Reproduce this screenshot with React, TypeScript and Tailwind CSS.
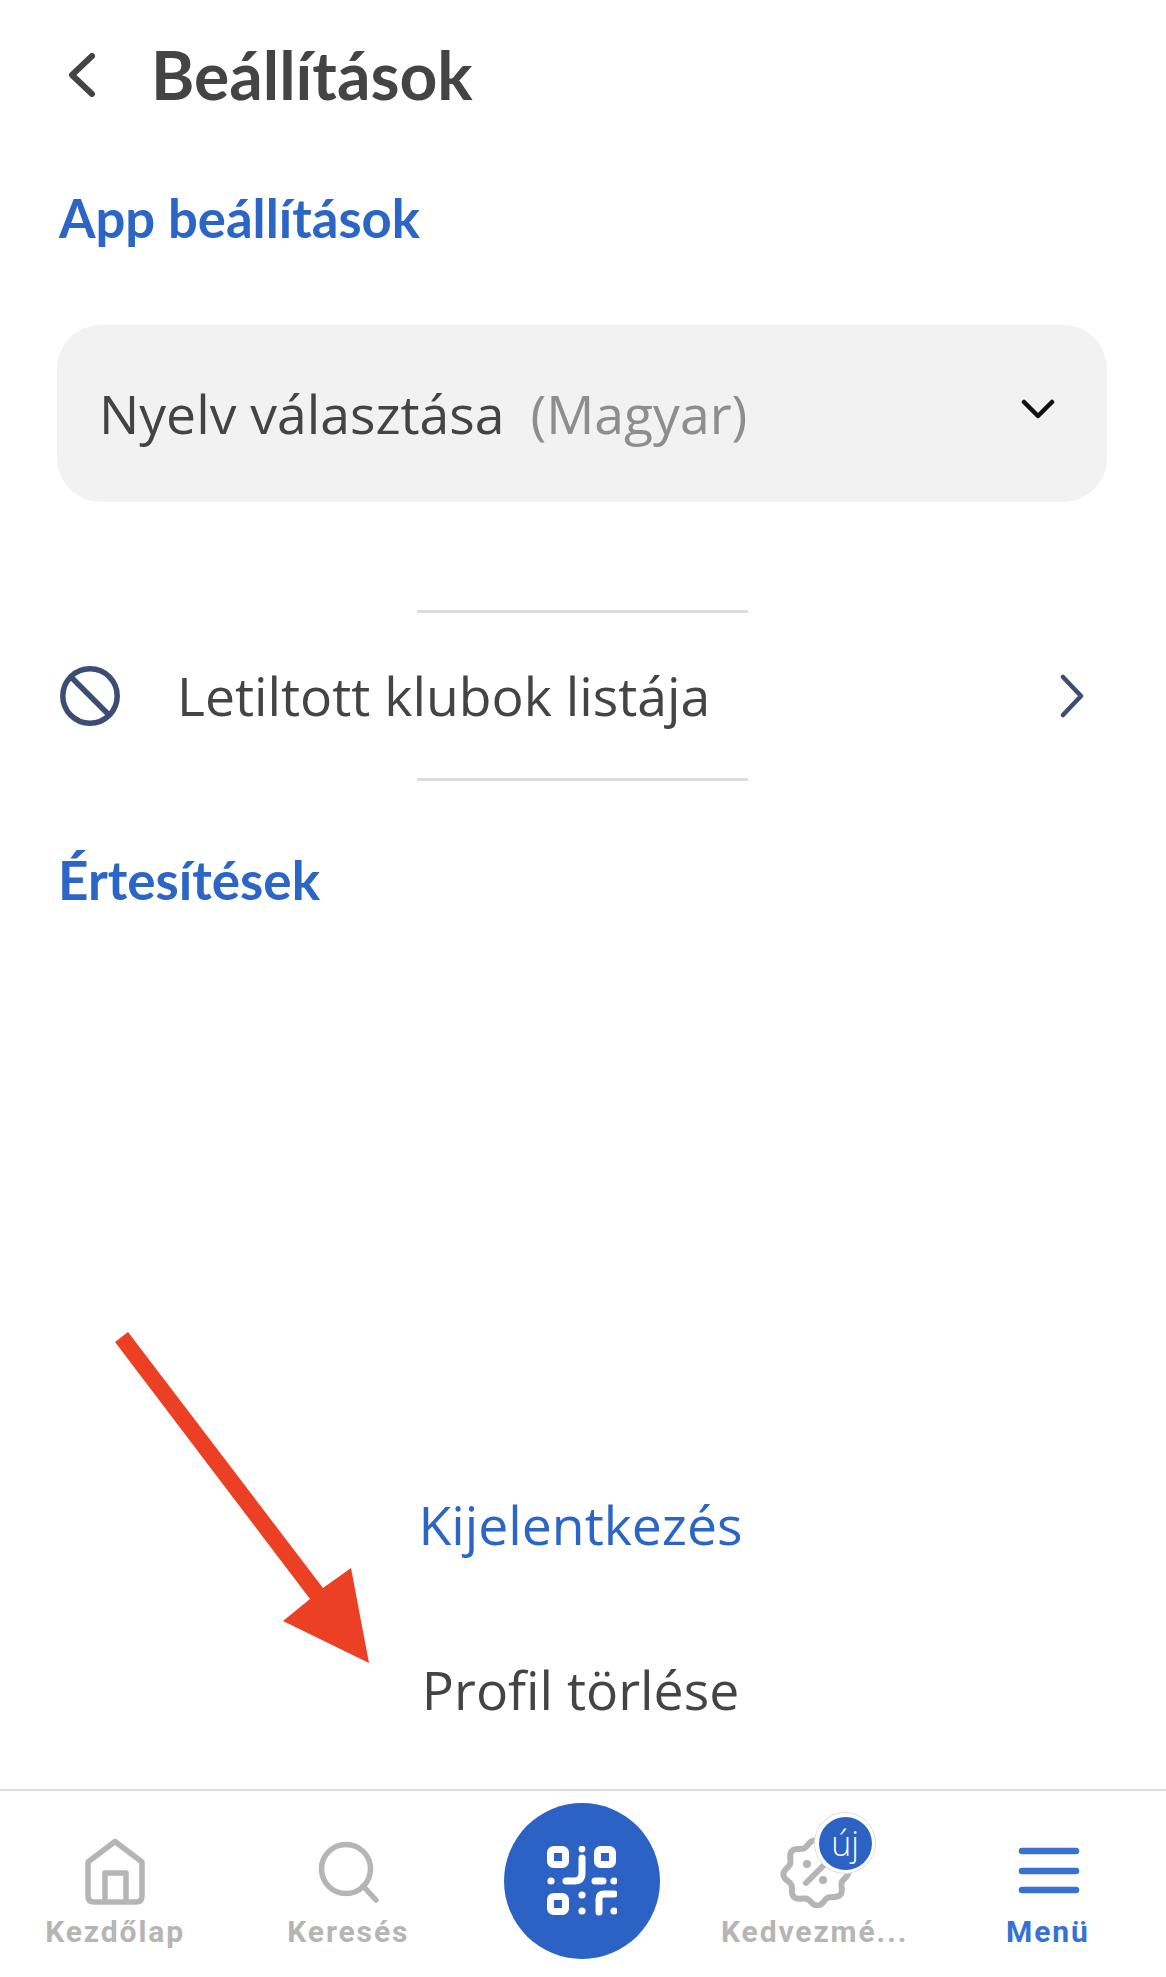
import React from "react";

const scallop = (() => {
  const pts: string[] = [];
  for (let i = 0; i <= 160; i++) {
    const a = (i / 160) * Math.PI * 2;
    const r = 30 + 2.6 * Math.cos(8 * a + 0.4);
    pts.push(`${(40 + r * Math.cos(a)).toFixed(2)} ${(37 + r * Math.sin(a)).toFixed(2)}`);
  }
  return "M" + pts.join("L") + "Z";
})();

function NavLabel({ text, active }: { text: string; active?: boolean }) {
  return (
    <span
      className={`mt-[6px] mr-[3px] h-[36px] font-['Roboto',sans-serif] text-[30px] leading-[36px] font-bold tracking-[1.9px] whitespace-nowrap ${
        active ? "text-[#3771d4]" : "text-[#b5b5b5]"
      }`}
    >
      {text}
    </span>
  );
}

function BottomNav() {
  return (
    <nav className="grid h-[188px] shrink-0 grid-cols-5 border-t-2 border-[#dcdcdc] bg-white">
      <div className="flex flex-col items-center pt-[45px]">
        <svg width="80" height="72" viewBox="0 0 80 72" fill="none" stroke="#b5b5b5" strokeWidth="5.5" strokeLinejoin="round">
          <path d="M38 5.5 L65 26 V60 Q65 66 59 66 H17 Q11 66 11 60 V26 Z" />
          <path d="M28 65 V37 H49 V65" />
        </svg>
        <NavLabel text="Kezdőlap" />
      </div>
      <div className="flex flex-col items-center pt-[45px]">
        <svg width="80" height="72" viewBox="0 0 80 72" fill="none" stroke="#b5b5b5" strokeWidth="5.5" strokeLinecap="round">
          <circle cx="36" cy="33" r="24.5" />
          <path d="M53 50 L66 64" />
        </svg>
        <NavLabel text="Keresés" />
      </div>
      <div className="flex justify-center pt-[12px] pr-[2px]">
        <div className="flex h-[156px] w-[156px] items-center justify-center rounded-full bg-[#2b62c4]">
          <svg width="70" height="70" viewBox="0 0 70 70" fill="none" stroke="#fff" strokeWidth="7" strokeLinecap="round">
            <rect x="3.5" y="3.5" width="15" height="15" rx="3" />
            <rect x="50.5" y="3.5" width="15" height="15" rx="3" />
            <rect x="3.5" y="50.5" width="15" height="15" rx="3" />
            <path d="M35 12 V27 Q35 35 27 35 H19" />
            <path d="M48 35 H56" />
            <path d="M52 66 V53 Q52 48 57 48 H67" />
            <g fill="#fff" stroke="none">
              <circle cx="35" cy="3" r="3.4" />
              <circle cx="4" cy="35" r="3.6" />
              <circle cx="67" cy="35" r="3.6" />
              <circle cx="35" cy="49" r="3.6" />
              <circle cx="35" cy="65" r="3.6" />
              <circle cx="67" cy="65" r="3.6" />
            </g>
          </svg>
        </div>
      </div>
      <div className="flex flex-col items-center pt-[45px]">
        <div className="relative h-[72px] w-[80px]">
          <svg width="80" height="72" viewBox="0 0 80 72" fill="none" stroke="#b5b5b5" strokeWidth="6" strokeLinecap="round">
            <path d={scallop} />
            <path d="M30 47 L49 28" />
            <g fill="#b5b5b5" stroke="none">
              <circle cx="31" cy="28" r="4" />
              <circle cx="47" cy="44" r="4" />
            </g>
          </svg>
          <div className="absolute top-[-24px] left-[38px] flex h-[62px] w-[62px] items-center justify-center rounded-full border border-[#dedede] bg-white">
            <span className="flex h-[53px] w-[53px] items-center justify-center rounded-full bg-[#2b62c4] font-['Open_Sans',sans-serif] text-[34px] leading-none font-light text-white">
              új
            </span>
          </div>
        </div>
        <NavLabel text="Kedvezmé..." />
      </div>
      <div className="flex flex-col items-center pt-[45px]">
        <svg width="80" height="72" viewBox="0 0 80 72" fill="none" stroke="#3771d4" strokeWidth="6.5" strokeLinecap="round">
          <path d="M13 15 H67 M13 35 H67 M13 54 H67" />
        </svg>
        <NavLabel text="Menü" active />
      </div>
    </nav>
  );
}

export default function App() {
  return (
    <div className="relative flex h-[1977px] w-[1166px] flex-col overflow-hidden bg-white font-['Open_Sans',sans-serif] text-[#444]">
      <header className="flex h-[150px] items-center pl-[69px]">
        <svg width="26" height="44" viewBox="0 0 26 44" fill="none" stroke="#444" strokeWidth="6" strokeLinecap="round" strokeLinejoin="round">
          <path d="M23 3 L3 22 L23 41" />
        </svg>
        <h1 className="ml-[56px] font-['Lato',sans-serif] text-[66px] leading-[70px] font-bold text-[#444]">
          Beállítások
        </h1>
      </header>

      <h2 className="mt-[38px] h-[60px] pl-[59px] font-['Lato',sans-serif] text-[52.6px] leading-[60px] font-bold text-[#2b65c6]">
        App beállítások
      </h2>

      <div className="mt-[77px] mr-[59px] ml-[57px] flex h-[177px] items-center justify-between rounded-[44px] bg-[#f2f2f3] pr-[52px] pl-[42px]">
        <p className="text-[53.5px] leading-[70px]">
          Nyelv választása <span className="ml-[12px] text-[#8e8e8e]">(Magyar)</span>
        </p>
        <svg className="mb-[10px]" width="34" height="20" viewBox="0 0 34 20" fill="none" stroke="#111" strokeWidth="4.5" strokeLinecap="round" strokeLinejoin="round">
          <path d="M3 3 L17 17 L31 3" />
        </svg>
      </div>

      <div className="mt-[108px] mr-[418px] ml-[417px] h-[3px] bg-[#dcdcdc]" />
      <div className="flex h-[165px] items-center justify-between pr-[82px] pl-[60px]">
        <div className="flex items-center">
          <svg width="60" height="60" viewBox="0 0 60 60" fill="none" stroke="#3b4d75" strokeWidth="5.5">
            <circle cx="30" cy="30" r="27.2" />
            <path d="M11 11 L49 49" />
          </svg>
          <span className="ml-[57px] text-[53.5px] leading-[70px]">Letiltott klubok listája</span>
        </div>
        <svg width="24" height="44" viewBox="0 0 24 44" fill="none" stroke="#3b4d75" strokeWidth="4.5" strokeLinecap="round" strokeLinejoin="round">
          <path d="M3 3 L21 22 L3 41" />
        </svg>
      </div>
      <div className="mr-[418px] ml-[417px] h-[3px] bg-[#dcdcdc]" />

      <h2 className="mt-[69px] h-[60px] pl-[58px] font-['Lato',sans-serif] text-[53px] leading-[60px] font-bold text-[#2b65c6]">
        Értesítések
      </h2>

      <div className="flex flex-1 flex-col items-center justify-end gap-[95px] pr-[5px] pb-[64px] text-[53.5px] leading-[70px]">
        <span className="text-[#2b65c6]">Kijelentkezés</span>
        <span>Profil törlése</span>
      </div>

      <BottomNav />

      {/* annotation drawn over the screenshot */}
      <svg className="absolute top-0 left-0" width="1166" height="1977" fill="#ec4024">
        <polygon points="115,1342 128,1332 323,1588 351,1568 369,1663 283,1621 310,1599" />
      </svg>
    </div>
  );
}
